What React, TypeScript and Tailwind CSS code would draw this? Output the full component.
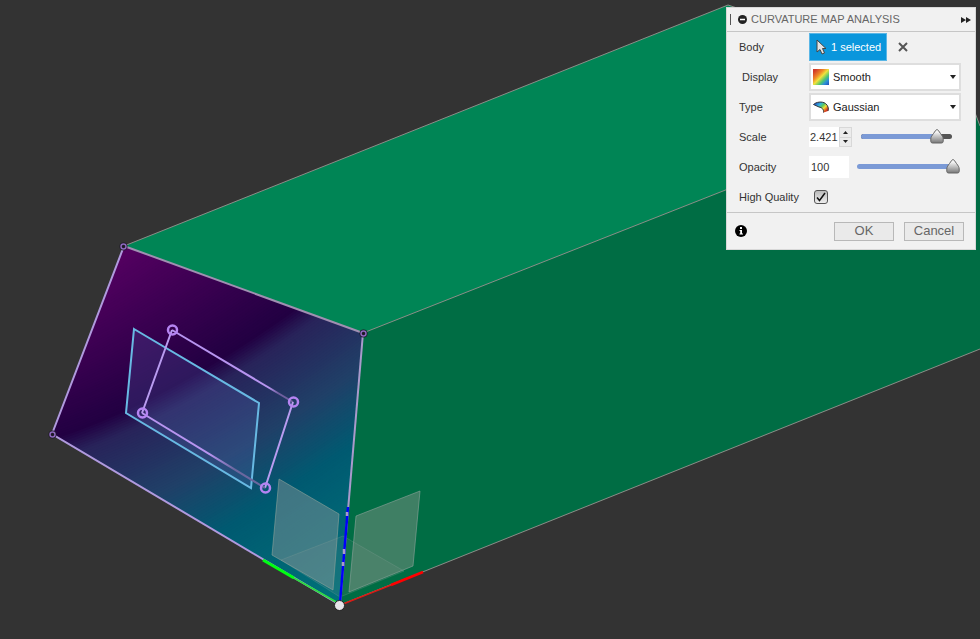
import { useState } from 'react';

const vertices = [
  { x: 123, y: 246 },
  { x: 363, y: 333 },
  { x: 52, y: 434 },
];

const sketchPoints = [
  { x: 172, y: 330 },
  { x: 293, y: 402 },
  { x: 265, y: 488 },
  { x: 142, y: 413 },
];

// equal-curvature curves across the front face: start, control, end
const isoCurves = [
  [40, 300, 124, 246, 210, 180],
  [40, 441, 178, 400, 345, 270],
  [200, 543, 300, 485, 420, 395],
  [300, 640, 345, 605, 420, 530],
];

const colorStops = [
  { at: 0, rgb: [86, 0, 98] },
  { at: 1, rgb: [34, 0, 66] },
  { at: 1.14, rgb: [40, 35, 90] },
  { at: 1.6, rgb: [32, 64, 104] },
  { at: 2, rgb: [0, 90, 113] },
  { at: 3, rgb: [0, 116, 122] },
];

const BANDS = 180;

function colorAt(level: number) {
  const i = Math.max(1, colorStops.findIndex((s) => s.at >= level));
  const a = colorStops[i - 1];
  const b = colorStops[i];
  const f = (level - a.at) / (b.at - a.at);
  return `rgb(${a.rgb.map((c, k) => Math.round(c + (b.rgb[k] - c) * f)).join(',')})`;
}

function bandPath(level: number) {
  const i = Math.min(Math.floor(level), 2);
  const [x0, y0, cx, cy, x1, y1] = isoCurves[i].map((v, k) => v + (isoCurves[i + 1][k] - v) * (level - i));
  return `M${x0} ${y0}Q${cx} ${cy} ${x1} ${y1}L500 ${y1}V700H0Z`;
}

const bands = Array.from({ length: BANDS }, (_, i) => {
  const level = (i / BANDS) * 3;
  return { d: bandPath(level), fill: colorAt(level) };
});

function Viewport() {
  return (
    <svg
      className="absolute inset-0 h-full w-full"
      viewBox="0 0 980 639"
      preserveAspectRatio="xMinYMin slice"
      role="img"
      aria-label="Curvature map of body"
    >
      <defs>
        <clipPath id="face">
          <path d="M124 246 363 333 340 605 52 434Z" />
        </clipPath>
        <linearGradient id="fade1" gradientUnits="userSpaceOnUse" x1="172" y1="330" x2="293" y2="402">
          <stop offset="0.8" stopColor="#b794f0" />
          <stop offset="0.88" stopColor="#6f5f9f" />
        </linearGradient>
        <linearGradient id="fade2" gradientUnits="userSpaceOnUse" x1="142" y1="413" x2="265" y2="488">
          <stop offset="0.55" stopColor="#b794f0" />
          <stop offset="0.75" stopColor="#6b679f" />
        </linearGradient>
      </defs>

      {/* body */}
      <path d="M124 246 728 5 740 9 974 110 980 126V349L363 333Z" fill="#008555" />
      <path d="M363 333 974 92V110L980 126V349L340 605Z" fill="#006d44" />
      <path d="M124 246 728 5 740 9M363 333 974 92M340 605 980 349M974 110 980 126" fill="none" stroke="#8b8e88" />

      {/* front face */}
      <g clipPath="url(#face)">
        <path d="M124 246 363 333 340 605 52 434Z" fill="#560062" />
        {bands.map((b) => (
          <path key={b.d} d={b.d} fill={b.fill} />
        ))}
      </g>
      <g fill="none" strokeWidth="2">
        <path d="M340 605 52 434 124 246" stroke="#b09ade" />
        <path d="M124 246 363 333" stroke="#a090b2" />
        <path d="M363 333 340 605" stroke="#a99acb" />
      </g>

      {/* sketch profiles */}
      <path d="M134 329 259 403 251 488 126 413Z" fill="#5b6fc0" fillOpacity="0.22" stroke="#68b9e3" strokeWidth="2" />
      <g fill="none" strokeWidth="2">
        <path d="M172 330 293 402" stroke="url(#fade1)" />
        <path d="M293 402 265 488M142 413 172 330" stroke="#b99cf0" />
        <path d="M142 413 265 488" stroke="url(#fade2)" />
      </g>
      {sketchPoints.map((p) => (
        <circle key={p.x} cx={p.x + 0.5} cy={p.y} r="4.5" fill="none" stroke="#b584f2" strokeWidth="2.5" />
      ))}

      {/* origin planes */}
      <g stroke="#8da39b" strokeOpacity="0.6" strokeWidth="1">
        <path d="M279 479 339 514 333 590 272 555Z" fill="#a0a0a0" fillOpacity="0.4" />
        <path d="M356 516 420 491 413 566 349 592Z" fill="#b4a0a0" fillOpacity="0.35" />
        <path d="M281 560 343 536 404 571 340 597Z" fill="#a0a0a0" fillOpacity="0.12" strokeOpacity="0.25" />
      </g>

      {/* origin axes */}
      <g fill="none">
        <path d="M348 507 340 603" stroke="#0000fa" strokeWidth="2.5" />
        <path d="M347 512V516M344 549V554M343 562V566" stroke="#a99acb" strokeWidth="2.5" />
        <path d="M263 560 294 578" stroke="#00ff12" strokeWidth="3" />
        <path d="M294 578 338 603" stroke="#2cdc40" strokeWidth="2" />
        <path d="M343 604 391 585" stroke="#d91a14" strokeWidth="1.5" />
        <path d="M391 585 423 572" stroke="#ff0000" strokeWidth="2.5" />
      </g>

      {vertices.map((p) => (
        <g key={p.x}>
          <circle cx={p.x + 0.5} cy={p.y + 0.5} r="4" fill="#1d1926" />
          <circle cx={p.x + 0.5} cy={p.y + 0.5} r="2.5" fill="#1d1926" stroke="#8d68bd" strokeWidth="1.5" />
        </g>
      ))}
      <circle cx="339.5" cy="605.5" r="5" fill="#e6e4ea" stroke="#222" />
    </svg>
  );
}

function SpectrumIcon() {
  return (
    <svg width="16" height="16" viewBox="0 0 16 16" aria-hidden="true">
      <defs>
        <linearGradient id="spectrum" x1="0" y1="0" x2="1" y2="1">
          <stop offset="0.1" stopColor="#d13a2a" />
          <stop offset="0.35" stopColor="#f08a28" />
          <stop offset="0.5" stopColor="#efe23c" />
          <stop offset="0.68" stopColor="#4fc870" />
          <stop offset="0.82" stopColor="#2b8fd8" />
          <stop offset="1" stopColor="#2450b8" />
        </linearGradient>
      </defs>
      <rect width="16" height="16" fill="url(#spectrum)" />
    </svg>
  );
}

function GaussianIcon() {
  return (
    <svg width="16" height="16" viewBox="0 0 16 16" aria-hidden="true">
      <defs>
        <linearGradient id="gauss" x1="0" y1="0" x2="1" y2="0.7">
          <stop offset="0.15" stopColor="#2457c8" />
          <stop offset="0.4" stopColor="#35b5dc" />
          <stop offset="0.58" stopColor="#5cc85c" />
          <stop offset="0.74" stopColor="#f2dc36" />
          <stop offset="0.95" stopColor="#d83a1e" />
        </linearGradient>
      </defs>
      <path
        d="M0.5 5.5C3 3 9 2 12.5 4.500 15 6.500 16 9.500 15 12L10.500 13.500C11 10.500 9 8.500 6 8Z"
        fill="url(#gauss)"
      />
      <path
        d="M0.500 5.500C3 3 9 2 12.500 4.500 15 6.500 16 9.500 15 12M0.500 5.500 6 8C9 8.500 11 10.500 10.500 13.500"
        fill="none"
        stroke="#30333a"
      />
    </svg>
  );
}

function SelectField({ id, icon, options }: { id: string; icon: React.ReactNode; options: string[] }) {
  return (
    <div className="relative h-7 flex-1">
      <select
        id={id}
        className="h-7 w-full appearance-none border-2 border-[#dedede] bg-white pl-[22px] pr-4 text-[11px] text-[#222]"
      >
        {options.map((o) => (
          <option key={o}>{o}</option>
        ))}
      </select>
      <span className="pointer-events-none absolute left-1 top-[6px]">{icon}</span>
      <svg className="pointer-events-none absolute right-[5px] top-3" width="6" height="4" viewBox="0 0 6 4" aria-hidden="true">
        <path d="M0 0H6L3 4Z" fill="#222" />
      </svg>
    </div>
  );
}

interface SliderProps {
  id: string;
  label: string;
  percent: number;
  onChange: (value: number) => void;
}

function Slider({ id, label, percent, onChange }: SliderProps) {
  return (
    <div className="relative h-5 flex-1">
      <div className="absolute inset-x-0 top-[7px] h-[5px] overflow-hidden rounded-full bg-[#555]">
        <div className="h-full bg-[#7b9ad6]" style={{ width: `${percent}%` }} />
      </div>
      <svg
        className="absolute top-[2px] -ml-[7px]"
        style={{ left: `${percent}%` }}
        width="14"
        height="15"
        viewBox="0 0 14 15"
        aria-hidden="true"
      >
        <defs>
          <linearGradient id={`${id}-knob`} x1="0" y1="0" x2="0" y2="1">
            <stop offset="0.2" stopColor="#f4f4f4" />
            <stop offset="1" stopColor="#777" />
          </linearGradient>
        </defs>
        <path
          d="M7 0.5C8 0.5 9 2.5 10.5 4.5 12 6.5 13.2 8 13.2 10V12.500Q13 14 11.500 14H2.500Q1 14 0.800 12.500V10C0.800 8 2 6.500 3.500 4.500 5 2.500 6 0.500 7 0.500Z"
          fill={`url(#${id}-knob)`}
          stroke="#666"
        />
      </svg>
      <input
        id={id}
        type="range"
        aria-label={label}
        value={percent}
        onChange={(e) => onChange(Number(e.target.value))}
        className="absolute inset-0 h-full w-full cursor-pointer opacity-0"
      />
    </div>
  );
}

function AnalysisPanel() {
  const [scale, setScale] = useState(83);
  const [opacity, setOpacity] = useState(100);
  const [highQuality, setHighQuality] = useState(true);

  return (
    <form
      className="relative w-[250px] border border-[#d8d8d8] bg-[#f1f1f1] text-[11px] text-[#333]"
      onSubmit={(e) => e.preventDefault()}
    >
      <header className="flex h-6 items-center border-b border-[#c6c6c6] pl-px pr-1">
        <span className="h-[11px] w-[3px] border-r border-[#555]" />
        <button type="button" aria-label="Collapse" className="ml-[7px]">
          <svg width="9" height="9" viewBox="0 0 9 9">
            <circle cx="4.5" cy="4.5" r="4.5" fill="#222" />
            <path d="M2 4.500H7" stroke="#fff" strokeWidth="1.5" />
          </svg>
        </button>
        <h1 className="ml-1 text-[11px] text-[#666]">CURVATURE MAP ANALYSIS</h1>
        <button type="button" aria-label="Expand" className="ml-auto">
          <svg width="10" height="6" viewBox="0 0 10 6">
            <path d="M0 0 5 3 0 6ZM5 0 10 3 5 6Z" fill="#222" />
          </svg>
        </button>
      </header>

      <div className="flex flex-col gap-[2px] py-px pl-3 pr-[14px]">
        <div className="flex h-7 items-center">
          <span className="w-[70px]">Body</span>
          <button type="button" className="flex h-7 w-[78px] items-center gap-1 border border-[#5ab6e6] bg-[#0a96dc] pl-[6px] text-white">
            <svg width="11" height="16" viewBox="0 0 11 16" aria-hidden="true">
              <path d="M1 1V13L4 10.500 6 15 8.500 14 6.500 9.500H10Z" fill="#e4e4e4" stroke="#444" />
            </svg>
            1 selected
          </button>
          <button type="button" aria-label="Clear selection" className="ml-[11px]">
            <svg width="10" height="10" viewBox="0 0 10 10">
              <path d="M1 1 9 9M9 1 1 9" stroke="#555" strokeWidth="2" />
            </svg>
          </button>
        </div>

        <div className="flex h-7 items-center">
          <label htmlFor="display" className="w-[70px] pl-[3px]">Display</label>
          <SelectField id="display" icon={<SpectrumIcon />} options={['Smooth', 'Bands']} />
        </div>

        <div className="flex h-7 items-center">
          <label htmlFor="type" className="w-[70px]">Type</label>
          <SelectField id="type" icon={<GaussianIcon />} options={['Gaussian', 'Principal Minimum', 'Principal Maximum']} />
        </div>

        <div className="flex h-7 items-center">
          <label htmlFor="scale" className="w-[70px]">Scale</label>
          <input id="scale" type="text" defaultValue="2.421" className="h-5 w-[30px] bg-white pl-px" />
          <span className="flex h-5 w-[13px] flex-col border border-[#d8d8d8] bg-[#ececec]">
            <button type="button" aria-label="Increase scale" className="flex flex-1 items-center justify-center">
              <svg width="5" height="3" viewBox="0 0 5 3"><path d="M0 3H5L2.500 0Z" fill="#222" /></svg>
            </button>
            <button type="button" aria-label="Decrease scale" className="flex flex-1 items-center justify-center border-t border-[#d8d8d8]">
              <svg width="5" height="3" viewBox="0 0 5 3"><path d="M0 0H5L2.500 3Z" fill="#222" /></svg>
            </button>
          </span>
          <div className="mx-[9px] flex flex-1">
            <Slider id="scale-slider" label="Scale slider" percent={scale} onChange={setScale} />
          </div>
        </div>

        <div className="flex h-7 items-center">
          <label htmlFor="opacity" className="w-[70px]">Opacity</label>
          <input
            id="opacity"
            type="text"
            value={opacity}
            onChange={(e) => setOpacity(Number(e.target.value) || 0)}
            className="h-[22px] w-10 bg-white pl-[2px]"
          />
          <div className="mx-2 flex flex-1">
            <Slider id="opacity-slider" label="Opacity slider" percent={opacity} onChange={setOpacity} />
          </div>
        </div>

        <div className="flex h-7 items-center">
          <label htmlFor="quality" className="w-[75px]">High Quality</label>
          <span className="relative h-[14px] w-[14px]">
            <input
              id="quality"
              type="checkbox"
              checked={highQuality}
              onChange={(e) => setHighQuality(e.target.checked)}
              className="block h-[14px] w-[14px] appearance-none rounded-[3px] border border-[#555] bg-linear-to-b from-[#bbb] to-[#eee]"
            />
            {highQuality && (
              <svg className="pointer-events-none absolute inset-0" width="14" height="14" viewBox="0 0 14 14" aria-hidden="true">
                <path d="M3 7.500 5.500 10.500 11 3" fill="none" stroke="#111" strokeWidth="1.5" />
              </svg>
            )}
          </span>
        </div>
      </div>

      <footer className="flex h-[37px] items-center border-t border-[#c6c6c6] pl-2 pr-[11px]">
        <button type="button" aria-label="Info">
          <svg width="12" height="12" viewBox="0 0 12 12">
            <circle cx="6" cy="6" r="6" fill="#000" />
            <path d="M5 2H7V4H5ZM4.500 5H7V8.500H8V9.500H4.500V8.500H5.200V6H4.500Z" fill="#fff" />
          </svg>
        </button>
        <div className="ml-auto flex gap-[10px] text-[13px] text-[#666]">
          <button type="submit" className="h-[19px] w-[60px] border border-[#b8b8b8] bg-[#eaeaea] leading-4">OK</button>
          <button type="button" className="h-[19px] w-[60px] border border-[#b8b8b8] bg-[#eaeaea] leading-4">Cancel</button>
        </div>
      </footer>
    </form>
  );
}

export default function App() {
  return (
    <main className="relative flex min-h-screen items-start justify-end overflow-hidden bg-[#333] pr-1 pt-[7px] font-['Liberation_Sans',Arial,sans-serif]">
      <Viewport />
      <AnalysisPanel />
    </main>
  );
}
